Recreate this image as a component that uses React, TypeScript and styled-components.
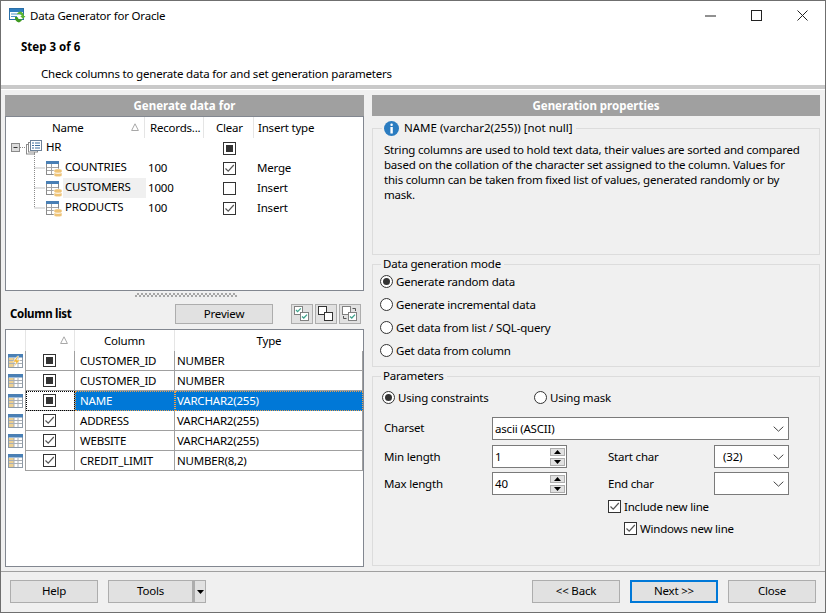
import * as React from 'react';
import styled, { createGlobalStyle } from 'styled-components';

type CheckState = 'on' | 'off' | 'mixed';

const GlobalStyle = createGlobalStyle`
  * { box-sizing: border-box; }
  html, body { margin: 0; padding: 0; background: #f0f0f0; }
  body {
    font-family: "Noto Sans", "Open Sans", Arial, sans-serif;
    font-size: 11.5px;
    line-height: 15px;
    letter-spacing: -0.2px;
    color: #000;
  }
`;

const Window = styled.div`
  width: 826px;
  height: 613px;
  display: flex;
  flex-direction: column;
  background: #f0f0f0;
  border: 1px solid #6f6f6f;
  overflow: hidden;
`;

const Header = styled.header`
  height: 89px;
  flex: none;
  background: #fff;
  border-bottom: 1px solid #fff;
`;

const HeaderBody = styled.div`
  height: 84px;
`;

const HeaderRule = styled.div`
  height: 4px;
  background: #c9c9c9;
`;

const TitleBar = styled.div`
  height: 29px;
  display: flex;
  align-items: center;
  padding-left: 8px;
`;

const AppTitle = styled.span`
  margin-left: 4px;
  flex: 1;
`;

const WinButton = styled.div`
  width: 46px;
  height: 29px;
  display: flex;
  align-items: center;
  justify-content: center;
`;

const StepTitle = styled.div`
  margin-top: 9px;
  padding-left: 20px;
  font-weight: 700;
  letter-spacing: 0;
`;

const StepHint = styled.div`
  margin-top: 12px;
  padding-left: 40px;
`;

const Main = styled.main`
  flex: 1;
  display: flex;
  gap: 8px;
  padding: 5px 0 0 4px;
  min-height: 0;
`;

const LeftPane = styled.section`
  width: 359px;
  display: flex;
  flex-direction: column;
`;

const RightPane = styled.section`
  width: 448px;
  display: flex;
  flex-direction: column;
`;

const PaneTitle = styled.div`
  height: 21px;
  flex: none;
  background: #a0a0a0;
  color: #fff;
  font-weight: 700;
  letter-spacing: 0;
  text-align: center;
  line-height: 21px;
`;

const TreeBox = styled.div`
  height: 175px;
  flex: none;
  background: #fff;
  border: 1px solid #828790;
`;

const TreeHead = styled.div`
  height: 21px;
  display: grid;
  grid-template-columns: 139px 59px 50px 1fr;
  align-items: stretch;
`;

const TreeHeadCell = styled.div<{ $left: number }>`
  display: flex;
  align-items: center;
  justify-content: space-between;
  padding: 0 5px 1px ${(p) => p.$left}px;
  border-right: 1px solid #e5e5e5;
  &:last-child { border-right: 0; }
`;

const TreeRow = styled.div`
  height: 20px;
  display: grid;
  grid-template-columns: 140px 58px 50px 1fr;
  align-items: center;
`;

const TreeName = styled.div`
  height: 20px;
  display: flex;
  align-items: center;
`;

const TreeLabel = styled.span<{ $active?: boolean }>`
  flex: 1;
  height: 20px;
  line-height: 18px;
  padding-left: 2px;
  background: ${(p) => (p.$active ? '#f0f0f0' : 'transparent')};
`;

const TreeRecords = styled.span`
  padding-left: 2px;
  line-height: 18px;
`;

const TreeClear = styled.div`
  display: flex;
  justify-content: center;
`;

const TreeInsert = styled.span`
  padding-left: 3px;
  line-height: 18px;
`;

const Splitter = styled.div`
  height: 12px;
  flex: none;
  display: flex;
  justify-content: center;
  padding: 2px 0 0 3px;
`;

const SplitterDots = styled.div`
  width: 102px;
  height: 4px;
  background: repeating-conic-gradient(#a6a6a6 0 25%, transparent 0 50%) 0 0 / 4px 4px;
`;

const ColumnBar = styled.div`
  height: 21px;
  flex: none;
  display: flex;
  align-items: center;
  padding-left: 5px;
`;

const BarTitle = styled.strong`
  width: 165px;
  font-weight: 700;
  letter-spacing: -0.3px;
`;

const PreviewButton = styled.div`
  width: 98px;
  height: 20px;
  display: flex;
  align-items: center;
  justify-content: center;
  background: #e1e1e1;
  border: 1px solid #adadad;
  margin-right: 18px;
`;

const IconButton = styled.div`
  width: 22px;
  height: 20px;
  margin-right: 2px;
  display: flex;
  align-items: center;
  justify-content: center;
  background: #e1e1e1;
  border: 1px solid #adadad;
`;

const ColumnGrid = styled.div`
  margin-top: 5px;
  height: 238px;
  flex: none;
  background: #fff;
  border: 1px solid #828790;
`;

const GridRow = styled.div<{ $head?: boolean }>`
  display: grid;
  grid-template-columns: 20px 49px 100px 188px;
  height: ${(p) => (p.$head ? 21 : 20)}px;
`;

const HeadCell = styled.div`
  display: flex;
  align-items: center;
  justify-content: center;
  padding-bottom: 1px;
  border-right: 1px solid #e5e5e5;
  &:last-child { border-right: 0; }
`;

const SortCell = styled(HeadCell)`
  justify-content: flex-end;
  padding-right: 6px;
`;

const IndicatorCell = styled.div`
  display: flex;
  align-items: center;
  padding-left: 2px;
  border-right: 1px solid #a0a0a0;
`;

const CheckCell = styled.div<{ $focus?: boolean }>`
  display: flex;
  align-items: center;
  justify-content: center;
  padding-right: 1px;
  border-right: 1px solid #a0a0a0;
  border-bottom: 1px solid #a0a0a0;
  ${(p) => p.$focus && 'outline: 1px dotted #000; outline-offset: -1px;'}
`;

const DataCell = styled.div<{ $pad: number; $selected?: boolean }>`
  display: flex;
  align-items: center;
  padding-left: ${(p) => p.$pad}px;
  padding-bottom: 1px;
  white-space: nowrap;
  border-right: 1px solid #a0a0a0;
  border-bottom: 1px solid #a0a0a0;
  ${(p) =>
    p.$selected &&
    'background: #0078d7; color: #fff; border: 1px dotted #e8a050; padding-left: ' + (p.$pad - 1) + 'px;'}
`;

const Group = styled.fieldset<{ $height: number; $gap?: number }>`
  margin: ${(p) => p.$gap ?? 1}px 0 0;
  padding: 0;
  height: ${(p) => p.$height}px;
  flex: none;
  border: 1px solid #dcdcdc;
  min-width: 0;
`;

const GroupTitle = styled.legend`
  margin-left: 8px;
  padding: 0 3px 0 2px;
  height: 16px;
  line-height: 16px;
  display: flex;
  align-items: center;
  gap: 5px;
`;

const InfoTitle = styled(GroupTitle)`
  margin-left: 9px;
  padding-left: 2px;
  letter-spacing: 0;
`;

const Description = styled.p`
  margin: 0;
  padding: 6px 15px 0 11px;
  line-height: 15px;
`;

const ModeList = styled.div`
  display: flex;
  flex-direction: column;
  gap: 3px;
  margin-top: -1px;
  padding-left: 7px;
`;

const Option = styled.div<{ $width?: number }>`
  height: 20px;
  display: flex;
  align-items: center;
  gap: 3px;
  ${(p) => p.$width && `width: ${p.$width}px;`}
`;

const RadioBox = styled.span<{ $on?: boolean }>`
  width: 13px;
  height: 13px;
  flex: none;
  display: flex;
  align-items: center;
  justify-content: center;
  border-radius: 50%;
  background: #fff;
  border: 1px solid #333;
  &::after {
    content: '';
    width: 7px;
    height: 7px;
    border-radius: 50%;
    background: ${(p) => (p.$on ? '#333' : 'transparent')};
  }
`;

const CheckBox = styled.span`
  width: 13px;
  height: 13px;
  flex: none;
  display: flex;
  align-items: center;
  justify-content: center;
  background: #fff;
  border: 1px solid #333;
`;

const CheckFill = styled.span`
  width: 7px;
  height: 7px;
  background: #333;
`;

const MethodRow = styled.div`
  display: flex;
  padding: 3px 0 0 9px;
`;

const ParamGrid = styled.div`
  display: grid;
  grid-template-columns: 108px 75px 41px 106px 75px;
  grid-template-rows: 24px 23px 23px 44px;
  row-gap: 4px;
  align-items: center;
  padding: 10px 0 0 11px;
`;

const ParamLabel = styled.span<{ $top?: boolean }>`
  ${(p) => p.$top && 'align-self: start; line-height: 21px;'}
`;

const ComboBox = styled.div<{ $pad?: number; $span?: boolean }>`
  height: 23px;
  display: flex;
  align-items: center;
  justify-content: space-between;
  padding: 0 4px 0 ${(p) => p.$pad ?? 2}px;
  background: #fff;
  border: 1px solid #7a7a7a;
  ${(p) => p.$span && 'grid-column: 2 / -1; align-self: start;'}
`;

const SpinBox = styled.div`
  height: 23px;
  width: 75px;
  display: flex;
  align-items: center;
  justify-content: space-between;
  padding: 0 1px 0 2px;
  background: #fff;
  border: 1px solid #7a7a7a;
`;

const SpinButtons = styled.div`
  display: flex;
  flex-direction: column;
  gap: 2px;
`;

const SpinButton = styled.div`
  width: 15px;
  height: 8px;
  display: flex;
  align-items: center;
  justify-content: center;
  background: #e1e1e1;
  border: 1px solid #adadad;
`;

const CheckOptions = styled.div`
  grid-column: 4 / -1;
  grid-row: 4;
  align-self: start;
  margin-top: -3px;
  display: flex;
  flex-direction: column;
  gap: 2px;
`;

const Indented = styled(Option)`
  margin-left: 16px;
`;

const Footer = styled.footer`
  height: 41px;
  flex: none;
  display: flex;
  justify-content: space-between;
  padding: 8px 9px 0;
  border-top: 1px solid #a0a0a0;
`;

const ButtonGroup = styled.div`
  display: flex;
  gap: 10px;
`;

const SplitButton = styled.div`
  display: flex;
`;

const Button = styled.div<{ $width?: number; $primary?: boolean }>`
  width: ${(p) => p.$width ?? 88}px;
  height: 23px;
  display: flex;
  align-items: center;
  justify-content: center;
  padding-bottom: 2px;
  background: #e1e1e1;
  border: ${(p) => (p.$primary ? '2px solid #0078d7' : '1px solid #adadad')};
`;

const ArrowButton = styled(Button)`
  border-left: 2px solid #adadad;
  padding-bottom: 0;
`;

const AppIcon = () => (
  <svg width="17" height="15" viewBox="0 0 17 15">
    <rect x="0.5" y="0.5" width="14" height="11" fill="#fff" stroke="#2a6fa8" />
    <rect x="1" y="1" width="13" height="3" fill="#2f7fc0" />
    <path d="M2 6h11M2 8.5h6" stroke="#4d93c9" />
    <path d="M11 3.5a5 5 0 0 1 4 4.5h1.5l-2.5 3-2.8-3h1.6a3 3 0 0 0-3-2l-2 .2a4.5 4.5 0 0 1 3.2-2.7z" fill="#5cb531" />
    <path d="M6 9h2.4a3 3 0 0 0 3 2.4l2-.4a4.6 4.6 0 0 1-3.4 3.4 5 5 0 0 1-4-5.4z" fill="#3f9a22" />
  </svg>
);

const Tri = ({ up }: { up?: boolean }) => (
  <svg width="7" height="4" viewBox="0 0 7 4">
    <path d={up ? 'M3.5 0L7 4H0z' : 'M0 0h7L3.5 4z'} fill="#000" />
  </svg>
);

const SortMark = () => (
  <svg width="8" height="8" viewBox="0 0 8 8">
    <path d="M4 .8L7.4 7.5H.6z" fill="none" stroke="#a8a8a8" />
  </svg>
);

const Chevron = () => (
  <svg width="11" height="6" viewBox="0 0 11 6">
    <path d="M.7.7L5.5 5.2 10.3.7" fill="none" stroke="#444" />
  </svg>
);

const Tick = () => (
  <svg width="11" height="11" viewBox="0 0 11 11">
    <path d="M1.5 5.5L4.2 8.2 9.8 2" fill="none" stroke="#555" strokeWidth="1.2" />
  </svg>
);

const Check = ({ state }: { state: CheckState }) => (
  <CheckBox>
    {state === 'on' && <Tick />}
    {state === 'mixed' && <CheckFill />}
  </CheckBox>
);

const TableBase = ({ lightning }: { lightning?: boolean }) => (
  <svg width="15" height="14" viewBox="0 0 15 14">
    <rect x="0.5" y="0.5" width="14" height="13" fill="#fff" stroke="#8e9aa6" />
    <rect x="0" y="0" width="15" height="3.5" fill="#4a80b5" />
    <rect x="1" y="4" width="5" height="9" fill="#ecd093" />
    <path d="M1 6.5h13M1 9.5h13M6 4v9M10 4v9" stroke="#a9afb5" />
    {lightning && <path d="M9.5 2L5 8h3l-2 5 6-7H8.7l2-4z" fill="#f0b73c" stroke="#fff" strokeWidth="0.5" />}
  </svg>
);

const TreeConnector = ({ last }: { last?: boolean }) => (
  <svg width="57" height="20" viewBox="0 0 57 20">
    <path d={last ? 'M28.5 0V10H39' : 'M28.5 0V20M28.5 10H39'} fill="none" stroke="#8a8a8a" strokeDasharray="1 1" />
    <rect x="40.5" y="3.5" width="12" height="13" fill="#fff" stroke="#8b8b8b" />
    <rect x="40" y="3" width="13" height="3" fill="#4a80b5" />
    <path d="M41 9.5h11M41 12.5h11M45.5 6v10" stroke="#a5a5a5" />
    <path d="M48 12c0-1.5 8-1.5 8 0v5.5c0 1.8-8 1.8-8 0z" fill="#eec377" stroke="#fff" strokeWidth="0.6" />
    <path d="M48 14.5c1.5 1 6.5 1 8 0" fill="none" stroke="#fff" />
  </svg>
);

const SchemaIcon = () => (
  <svg width="38" height="20" viewBox="0 0 38 20">
    <g transform="translate(4 0)">
      <rect x="1.5" y="5.5" width="8" height="8" fill="#ddd" stroke="#8a8a8a" />
      <path d="M3.5 9.5h4" stroke="#333" />
      <path d="M10 9.5h6" stroke="#8a8a8a" strokeDasharray="1 1" />
      <path d="M24.5 16v4" stroke="#8a8a8a" strokeDasharray="1 1" />
      <rect x="16.5" y="6.5" width="8" height="9.5" fill="#fff" stroke="#8a8a8a" />
      <rect x="18.5" y="4.5" width="9" height="9.5" fill="#fff" stroke="#8a8a8a" />
      <rect x="20.5" y="2.5" width="11" height="10" fill="#fff" stroke="#6d8299" />
      <path d="M22 5h2M25 5h5M22 7.5h2M25 7.5h5M22 10h2M25 10h5" stroke="#3f6f9e" />
    </g>
  </svg>
);

const InfoIcon = () => (
  <svg width="15" height="15" viewBox="0 0 15 15">
    <circle cx="7.5" cy="7.5" r="7.5" fill="#2b7cc0" />
    <rect x="6.4" y="2.5" width="2.4" height="2.4" rx="1" fill="#fff" />
    <rect x="6.4" y="6" width="2.4" height="6.5" fill="#fff" />
  </svg>
);

const SquaresIcon = ({ kind }: { kind: 'check' | 'clear' | 'swap' }) => {
  const edge = kind === 'clear' ? '#333' : '#808080';
  return (
    <svg width="16" height="15" viewBox="0 0 16 15">
      <rect x="0.5" y="0.5" width="8" height="8" fill="#fff" stroke={edge} />
      <rect x="6.5" y="6.5" width="8" height="8" fill="#fff" stroke={edge} />
      {kind === 'check' && <path d="M2 4L3.6 5.6 6.8 2.4" fill="none" stroke="#3fa28c" strokeWidth="1.3" />}
      {kind !== 'clear' && <path d="M8 10.4L9.8 12 13 8.6" fill="none" stroke="#3fa28c" strokeWidth="1.3" />}
      {kind === 'swap' && <path d="M10.5 2.5h3V5M4.5 12.5h-3V10" fill="none" stroke="#555" />}
    </svg>
  );
};

const treeRows = [
  { name: 'COUNTRIES', records: '100', clear: 'on' as CheckState, insert: 'Merge' },
  { name: 'CUSTOMERS', records: '1000', clear: 'off' as CheckState, insert: 'Insert', active: true },
  { name: 'PRODUCTS', records: '100', clear: 'on' as CheckState, insert: 'Insert', last: true },
];

const columnRows = [
  { name: 'CUSTOMER_ID', type: 'NUMBER', check: 'mixed' as CheckState, lightning: true },
  { name: 'CUSTOMER_ID', type: 'NUMBER', check: 'mixed' as CheckState },
  { name: 'NAME', type: 'VARCHAR2(255)', check: 'mixed' as CheckState, selected: true },
  { name: 'ADDRESS', type: 'VARCHAR2(255)', check: 'on' as CheckState },
  { name: 'WEBSITE', type: 'VARCHAR2(255)', check: 'on' as CheckState },
  { name: 'CREDIT_LIMIT', type: 'NUMBER(8,2)', check: 'on' as CheckState },
];

const modes = ['Generate random data', 'Generate incremental data', 'Get data from list / SQL-query', 'Get data from column'];

export default function App() {
  return (
    <Window>
      <GlobalStyle />
      <Header>
        <HeaderBody>
          <TitleBar>
            <AppIcon />
            <AppTitle>Data Generator for Oracle</AppTitle>
            <WinButton>
              <svg width="11" height="2" viewBox="0 0 11 2"><path d="M0 1h11" stroke="#222" /></svg>
            </WinButton>
            <WinButton>
              <svg width="11" height="11" viewBox="0 0 11 11"><rect x="0.5" y="0.5" width="10" height="10" fill="none" stroke="#222" /></svg>
            </WinButton>
            <WinButton>
              <svg width="11" height="11" viewBox="0 0 11 11"><path d="M.5.5l10 10M10.5.5l-10 10" stroke="#222" /></svg>
            </WinButton>
          </TitleBar>
          <StepTitle>Step 3 of 6</StepTitle>
          <StepHint>Check columns to generate data for and set generation parameters</StepHint>
        </HeaderBody>
        <HeaderRule />
      </Header>

      <Main>
        <LeftPane>
          <PaneTitle>Generate data for</PaneTitle>
          <TreeBox>
            <TreeHead>
              <TreeHeadCell $left={46}>Name <SortMark /></TreeHeadCell>
              <TreeHeadCell $left={5}>Records...</TreeHeadCell>
              <TreeHeadCell $left={12}>Clear</TreeHeadCell>
              <TreeHeadCell $left={4}>Insert type</TreeHeadCell>
            </TreeHead>
            <TreeRow>
              <TreeName>
                <SchemaIcon />
                <TreeLabel>HR</TreeLabel>
              </TreeName>
              <span />
              <TreeClear><Check state="mixed" /></TreeClear>
              <span />
            </TreeRow>
            {treeRows.map((row) => (
              <TreeRow key={row.name}>
                <TreeName>
                  <TreeConnector last={row.last} />
                  <TreeLabel $active={row.active}>{row.name}</TreeLabel>
                </TreeName>
                <TreeRecords>{row.records}</TreeRecords>
                <TreeClear><Check state={row.clear} /></TreeClear>
                <TreeInsert>{row.insert}</TreeInsert>
              </TreeRow>
            ))}
          </TreeBox>
          <Splitter><SplitterDots /></Splitter>
          <ColumnBar>
            <BarTitle>Column list</BarTitle>
            <PreviewButton>Preview</PreviewButton>
            <IconButton><SquaresIcon kind="check" /></IconButton>
            <IconButton><SquaresIcon kind="clear" /></IconButton>
            <IconButton><SquaresIcon kind="swap" /></IconButton>
          </ColumnBar>
          <ColumnGrid>
            <GridRow $head>
              <HeadCell />
              <SortCell><SortMark /></SortCell>
              <HeadCell>Column</HeadCell>
              <HeadCell>Type</HeadCell>
            </GridRow>
            {columnRows.map((row, i) => (
              <GridRow key={i}>
                <IndicatorCell><TableBase lightning={row.lightning} /></IndicatorCell>
                <CheckCell $focus={row.selected}><Check state={row.check} /></CheckCell>
                <DataCell $pad={5} $selected={row.selected}>{row.name}</DataCell>
                <DataCell $pad={2} $selected={row.selected}>{row.type}</DataCell>
              </GridRow>
            ))}
          </ColumnGrid>
        </LeftPane>

        <RightPane>
          <PaneTitle>Generation properties</PaneTitle>
          <Group $height={135} $gap={4}>
            <InfoTitle><InfoIcon />NAME (varchar2(255)) [not null]</InfoTitle>
            <Description>
              String columns are used to hold text data, their values are sorted and compared based on the collation of the character set assigned to the column. Values for this column can be taken from fixed list of values, generated randomly or by mask.
            </Description>
          </Group>
          <Group $height={111}>
            <GroupTitle>Data generation mode</GroupTitle>
            <ModeList>
              {modes.map((mode, i) => (
                <Option key={mode}>
                  <RadioBox $on={i === 0} />
                  {mode}
                </Option>
              ))}
            </ModeList>
          </Group>
          <Group $height={198}>
            <GroupTitle>Parameters</GroupTitle>
            <MethodRow>
              <Option $width={152}><RadioBox $on />Using constraints</Option>
              <Option><RadioBox />Using mask</Option>
            </MethodRow>
            <ParamGrid>
              <ParamLabel $top>Charset</ParamLabel>
              <ComboBox $span>ascii (ASCII)<Chevron /></ComboBox>

              <ParamLabel>Min length</ParamLabel>
              <SpinBox>
                1
                <SpinButtons>
                  <SpinButton><Tri up /></SpinButton>
                  <SpinButton><Tri /></SpinButton>
                </SpinButtons>
              </SpinBox>
              <span />
              <ParamLabel>Start char</ParamLabel>
              <ComboBox $pad={8}>(32)<Chevron /></ComboBox>

              <ParamLabel>Max length</ParamLabel>
              <SpinBox>
                40
                <SpinButtons>
                  <SpinButton><Tri up /></SpinButton>
                  <SpinButton><Tri /></SpinButton>
                </SpinButtons>
              </SpinBox>
              <span />
              <ParamLabel>End char</ParamLabel>
              <ComboBox><span /><Chevron /></ComboBox>

              <CheckOptions>
                <Option><Check state="on" />Include new line</Option>
                <Indented><Check state="on" />Windows new line</Indented>
              </CheckOptions>
            </ParamGrid>
          </Group>
        </RightPane>
      </Main>

      <Footer>
        <ButtonGroup>
          <Button>Help</Button>
          <SplitButton>
            <Button $width={85}>Tools</Button>
            <ArrowButton $width={13}><Tri /></ArrowButton>
          </SplitButton>
        </ButtonGroup>
        <ButtonGroup>
          <Button>&lt;&lt; Back</Button>
          <Button $primary>Next &gt;&gt;</Button>
          <Button>Close</Button>
        </ButtonGroup>
      </Footer>
    </Window>
  );
}
